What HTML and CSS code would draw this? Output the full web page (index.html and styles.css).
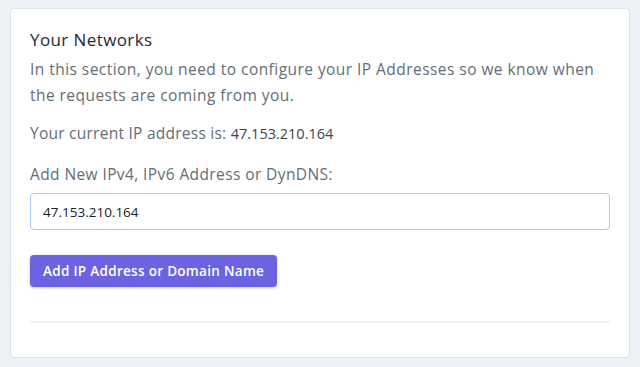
FILE: index.html
```html
<!DOCTYPE html>
<html>
<head>
	<meta charset="utf-8">
	<title>Your Networks</title>
	<link rel="stylesheet" href="styles.css">
</head>
<body>
<div class="card">
	<h3 class="title">Your Networks</h3>
	<p class="intro">In this section, you need to configure your IP Addresses so we know when the requests are coming from you.</p>
	<p class="current">Your current IP address is: <span>47.153.210.164</span></p>
	<form class="add-form">
		<label for="ip">Add New IPv4, IPv6 Address or DynDNS:</label>
		<input type="text" id="ip" name="ip" value="47.153.210.164">
		<button type="button" class="add-btn">Add IP Address or Domain Name</button>
	</form>
	<hr class="divider">
</div>
</body>
</html>
```
FILE: styles.css
```css
html, *, *::before,
*::after{
	box-sizing: border-box;
}
body{
	margin: 0;
	padding: 8px 10px 9px 10px;
	background: #edf1f5;
	font-family: "Open Sans", sans-serif;
	color: #646d77;
}
.card{
	background: #fff;
	border: 1px solid #dde2e7;
	border-radius: 4px;
	height: 350px;
	padding: 19px 19px 0 19px;
}
.title{
	margin: 0;
	font-size: 17px;
	font-weight: 400;
	letter-spacing: 0.4px;
	color: #1e2a36;
	line-height: 24px;
}
.intro{
	margin: 4px 0 0 0;
	font-size: 15.5px;
	letter-spacing: 0.45px;
	line-height: 26px;
}
.current{
	margin: 12px 0 0 0;
	font-size: 15.5px;
	letter-spacing: 0.25px;
	line-height: 26px;
}
.current span{
	font-size: 14.5px;
	letter-spacing: 0;
	color: #3a4550;
}
.add-form{
	display: flex;
	flex-direction: column;
	align-items: flex-start;
	margin-top: 14px;
}
label{
	font-size: 15.5px;
	letter-spacing: 0.4px;
	line-height: 26px;
}
input{
	width: 100%;
	height: 37px;
	margin-top: 6px;
	border: 1px solid #a9c9f7;
	border-radius: 4px;
	padding: 0 12px;
	font-family: inherit;
	font-size: 13.5px;
	color: #222;
	outline: none;
}
.add-btn{
	margin-top: 25px;
	height: 32px;
	padding: 0 13px;
	border: none;
	border-radius: 4px;
	background: #6c63e3;
	color: #fff;
	font-family: inherit;
	font-size: 13.5px;
	font-weight: 600;
	letter-spacing: 0.3px;
	box-shadow: 0 1px 3px rgba(108, 99, 227, 0.4);
}
.divider{
	margin: 34px 0 0 0;
	border: none;
	border-top: 2px solid #eef0f2;
}
```
